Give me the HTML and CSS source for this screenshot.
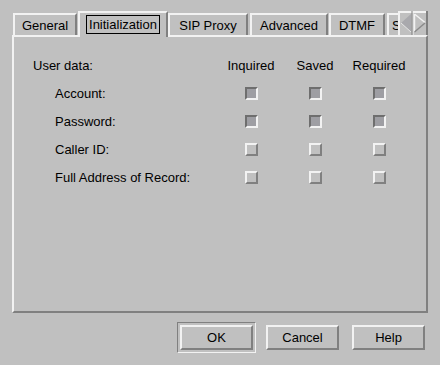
FILE: index.html
```html
<!DOCTYPE html>
<html>
<head>
<meta charset="utf-8">
<link rel="stylesheet" href="styles.css">
</head>
<body>
<div class="dialog">
  <div class="tabbar">
    <div class="tab w-general">General</div>
    <div class="tab active w-init"><span class="focus">Initialization</span></div>
    <div class="tab w-sip">SIP Proxy</div>
    <div class="tab w-adv gap2">Advanced</div>
    <div class="tab w-dtmf gap1">DTMF</div>
    <div class="tab w-s gap2"><span class="clip">S</span></div>
    <div class="scroller">
      <svg width="30" height="24" viewBox="0 0 30 24">
        <rect x="0" y="0" width="30" height="24" fill="#c0c0c0"/>
        <line x1="0" y1="1" x2="30" y2="1" stroke="#f2f2f2" stroke-width="2"/>
        <line x1="1" y1="0" x2="1" y2="24" stroke="#f2f2f2" stroke-width="2"/>
        <line x1="15" y1="0" x2="15" y2="24" stroke="#f2f2f2" stroke-width="1"/>
        <line x1="14" y1="0" x2="14" y2="24" stroke="#808080" stroke-width="1"/>
        <line x1="29" y1="0" x2="29" y2="24" stroke="#808080" stroke-width="2"/>
        <polygon points="3,12 13,3 13,21" fill="#a9a9ad"/>
        <line x1="3" y1="12" x2="13" y2="21" stroke="#e6e6e6" stroke-width="1"/>
        <line x1="16.5" y1="3" x2="27" y2="11.5" stroke="#f2f2f2" stroke-width="1.5"/>
        <line x1="16.5" y1="3" x2="16.5" y2="21" stroke="#f2f2f2" stroke-width="1.5"/>
        <line x1="16.5" y1="21" x2="27" y2="12" stroke="#8a8a8a" stroke-width="1.5"/>
      </svg>
    </div>
  </div>
  <div class="panel">
    <div class="grid">
      <div class="lbl">User data:</div>
      <div class="hdr">Inquired</div>
      <div class="hdr">Saved</div>
      <div class="hdr">Required</div>

      <div class="lbl sub">Account:</div>
      <div class="cell"><span class="cb on"></span></div>
      <div class="cell"><span class="cb on"></span></div>
      <div class="cell"><span class="cb on"></span></div>

      <div class="lbl sub">Password:</div>
      <div class="cell"><span class="cb on"></span></div>
      <div class="cell"><span class="cb on"></span></div>
      <div class="cell"><span class="cb on"></span></div>

      <div class="lbl sub">Caller ID:</div>
      <div class="cell"><span class="cb"></span></div>
      <div class="cell"><span class="cb"></span></div>
      <div class="cell"><span class="cb"></span></div>

      <div class="lbl sub">Full Address of Record:</div>
      <div class="cell"><span class="cb"></span></div>
      <div class="cell"><span class="cb"></span></div>
      <div class="cell"><span class="cb"></span></div>
    </div>
  </div>
  <div class="actions">
    <div class="default-frame"><button class="btn">OK</button></div>
    <button class="btn cancel">Cancel</button>
    <button class="btn help">Help</button>
  </div>
</div>
</body>
</html>
```

FILE: styles.css
```css
html, body {
  margin: 0;
  padding: 0;
  background: #c0c0c0;
}
body {
  width: 440px;
  height: 365px;
  overflow: hidden;
  font-family: "Liberation Sans", Arial, sans-serif;
  font-size: 13px;
  color: #000;
}
.dialog {
  padding: 11px 12px 0 12px;
}
.tabbar {
  display: flex;
  align-items: flex-end;
  height: 24px;
  padding-left: 1px;
}
.tab {
  box-sizing: border-box;
  height: 22px;
  border-top: 2px solid #f2f2f2;
  border-left: 2px solid #f2f2f2;
  border-right: 2px solid #808080;
  display: flex;
  align-items: center;
  justify-content: center;
  white-space: nowrap;
  background: #c0c0c0;
}
.tab.active {
  height: 26px;
  margin-bottom: -2px;
  position: relative;
  z-index: 1;
  padding-bottom: 2px;
  margin-left: 1px;
}
.focus {
  border: 1px solid #000;
  padding: 0 2px;
  line-height: 17px;
}
.w-general { width: 64px; }
.w-init { width: 90px; }
.w-sip { width: 80px; }
.w-adv { width: 78px; }
.w-dtmf { width: 56px; }
.w-s {
  width: 11px;
  border-right: none;
  justify-content: flex-start;
  overflow: hidden;
  padding-left: 3px;
}
.gap1 { margin-left: 1px; }
.gap2 { margin-left: 2px; }
.clip { display: block; }
.scroller {
  width: 30px;
  height: 24px;
  display: flex;
}
.panel {
  box-sizing: border-box;
  width: 416px;
  height: 278px;
  border-style: solid;
  border-width: 2px;
  border-color: #f2f2f2 #808080 #808080 #f2f2f2;
}
.grid {
  display: grid;
  grid-template-columns: 186px 64px 64px 64px;
  grid-auto-rows: 28px;
  align-items: center;
  padding: 14px 0 0 19px;
}
.lbl.sub { padding-left: 22px; }
.hdr, .cell {
  text-align: center;
  display: flex;
  justify-content: center;
  align-items: center;
}
.cb {
  display: block;
  box-sizing: border-box;
  width: 13px;
  height: 13px;
  border: 2px solid;
  border-color: #f2f2f2 #808080 #808080 #f2f2f2;
  background: #c0c0c0;
}
.cb.on {
  border-color: #6e6e6e #f2f2f2 #f2f2f2 #6e6e6e;
  background: #9e9ea3;
}
.actions {
  display: flex;
  justify-content: flex-end;
  align-items: center;
  padding-right: 3px;
  margin-top: 9px;
}
.default-frame {
  border: 1px solid;
  border-color: #808080 #f2f2f2 #f2f2f2 #808080;
  padding: 2px;
  display: flex;
}
.btn {
  box-sizing: border-box;
  width: 73px;
  height: 25px;
  margin: 0;
  padding: 0;
  border: 2px solid;
  border-color: #f2f2f2 #808080 #808080 #f2f2f2;
  background: #c0c0c0;
  font-family: "Liberation Sans", Arial, sans-serif;
  font-size: 13px;
  color: #000;
}
.cancel { margin-left: 10px; }
.help { margin-left: 13px; }
```
